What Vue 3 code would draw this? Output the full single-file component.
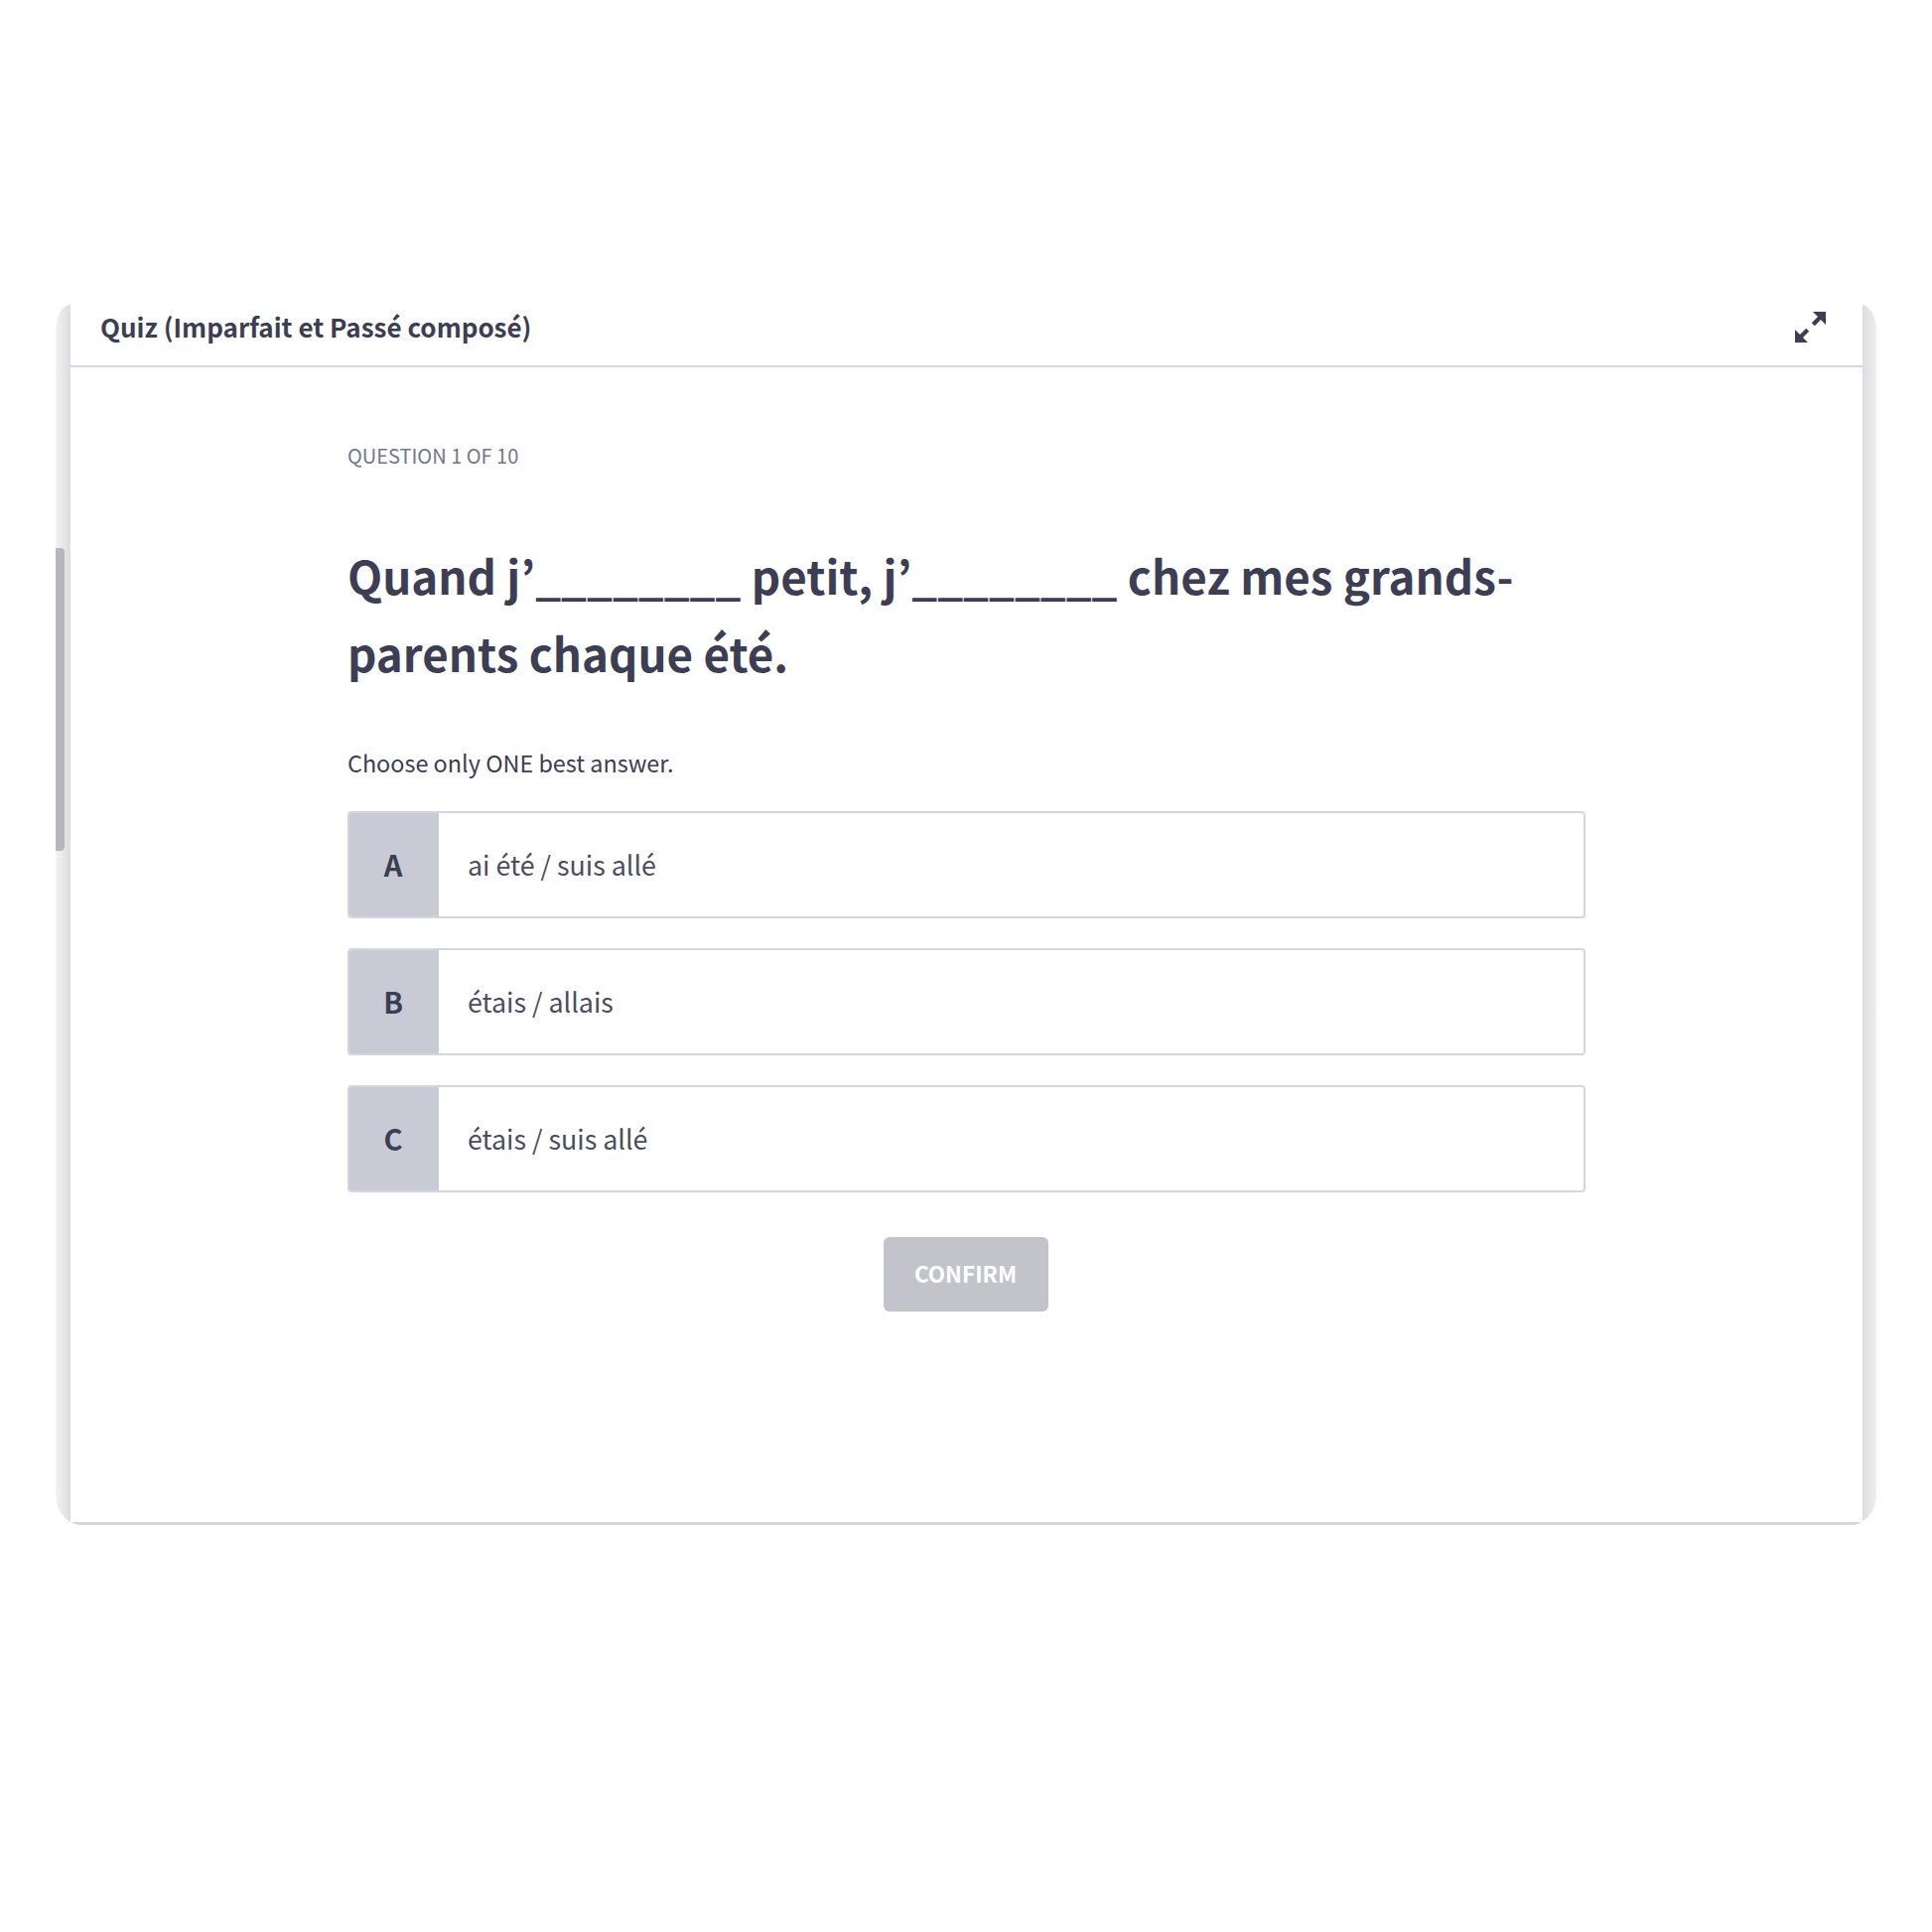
<template>
  <div class="page">
    <div class="frame">
      <div class="scrollbar"></div>
      <div class="card">
        <header class="card-header">
          <span class="quiz-title">{{ quiz.title }}</span>
          <svg class="expand" viewBox="0 0 31 31" aria-hidden="true">
            <path d="M18 0H31V13L26 8L19.8 14.2L16.8 11.2L23 5Z" />
            <path d="M13 31H0V18L5 23L11.2 16.8L14.2 19.8L8 26Z" />
          </svg>
        </header>
        <main class="quiz">
          <div class="counter">{{ quiz.counter }}</div>
          <h1 class="question">{{ quiz.question }}</h1>
          <p class="hint">{{ quiz.hint }}</p>
          <div class="answers">
            <div v-for="a in quiz.answers" :key="a.letter" class="answer">
              <div class="letter">{{ a.letter }}</div>
              <div class="answer-text">{{ a.text }}</div>
            </div>
          </div>
          <button class="confirm" disabled>CONFIRM</button>
        </main>
      </div>
    </div>
  </div>
</template>

<script setup>
const quiz = {
  title: 'Quiz (Imparfait et Passé composé)',
  counter: 'QUESTION 1 OF 10',
  question: 'Quand j’________ petit, j’________ chez mes grands-parents chaque été.',
  hint: 'Choose only ONE best answer.',
  answers: [
    { letter: 'A', text: 'ai été / suis allé' },
    { letter: 'B', text: 'étais / allais' },
    { letter: 'C', text: 'étais / suis allé' },
  ],
};
</script>

<style>
body {
  background: #fff;
}
</style>

<style scoped>
.page {
  height: 1946px;
  padding: 307px 56px 0;
  box-sizing: border-box;
  background: #fff;
  font-family: "Noto Sans CJK KR", "Noto Sans", sans-serif;
  color: #3b3e55;
}

/* grey gutter round the white card */
.frame {
  position: relative;
  height: 1230px;
  padding: 0 14px 4px 15px;
  box-sizing: border-box;
  border-radius: 15px 15px 30px 30px / 26px 26px 30px 30px;
  background: linear-gradient(90deg, #f3f3f5 0, #dcdce0 15px, #fff 15px, #fff 1819px, #dcdce0 1819px, #eeeef0 1834px);
  overflow: hidden;
}

.scrollbar {
  position: absolute;
  left: -1px;
  top: 245px;
  width: 10px;
  height: 305px;
  border-radius: 0 4px 4px 0;
  background: #b6b7bc;
}

.card {
  height: 100%;
  background: #fff;
  box-shadow: 0 3px 0 #d6d6da;
}

.card-header {
  display: flex;
  align-items: center;
  justify-content: space-between;
  height: 43px;
  padding: 0 37px 18px 30px;
  border-bottom: 2px solid #d3d6e0;
}

.quiz-title {
  font-size: 26px;
  font-weight: 700;
}

.expand {
  width: 31px;
  height: 31px;
  margin-top: 2px;
  fill: #3b3e55;
}

.quiz {
  display: flex;
  flex-direction: column;
  padding: 74px 279px 0 279px;
}

.counter {
  font-size: 20px;
  line-height: 30px;
  color: #74768c;
}

.question {
  margin: 66px 0 0;
  font-size: 45.7px;
  font-weight: 700;
  line-height: 78px;
}

.hint {
  margin: 54px 0 0;
  font-size: 23.4px;
  line-height: 37px;
}

.answers {
  display: flex;
  flex-direction: column;
  gap: 30px;
  margin-top: 30px;
}

.answer {
  display: flex;
  height: 108px;
  box-sizing: border-box;
  border: 2px solid #d3d6e0;
  border-radius: 4px;
  overflow: hidden;
}

.letter {
  display: flex;
  align-items: center;
  justify-content: center;
  width: 88px;
  padding: 0 2px 3px 0;
  background: #c8cbd6;
  font-size: 29px;
  font-weight: 700;
}

.answer-text {
  display: flex;
  align-items: center;
  padding: 0 0 2px 29px;
  font-size: 26.8px;
  color: #4a4d62;
}

.confirm {
  align-self: center;
  width: 166px;
  height: 75px;
  margin: 45px 2px 0 0;
  padding: 0 0 3px;
  border: 0;
  border-radius: 6px;
  background: #c3c4c9;
  color: #fff;
  font-family: inherit;
  font-size: 22.5px;
  font-weight: 700;
}
</style>
